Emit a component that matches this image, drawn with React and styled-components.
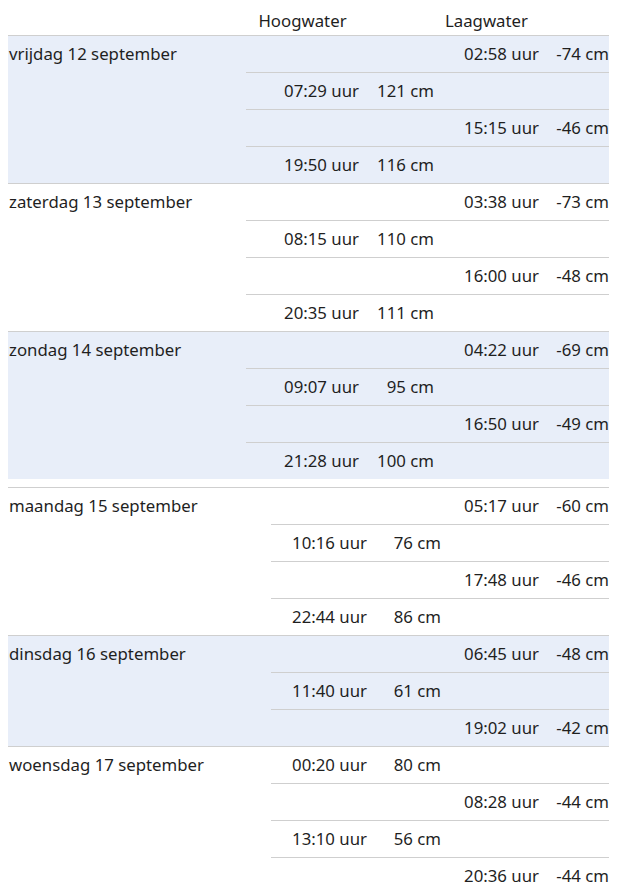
import React from "react";
import styled, { createGlobalStyle } from "styled-components";

const GlobalStyle = createGlobalStyle`
  body {
    margin: 8px;
    background: #ffffff;
    color: #1f1f1f;
    font-family: "Noto Sans", "Open Sans", sans-serif;
    font-size: 16.8px;
  }
`;

const Table = styled.table`
  width: 601px;
  table-layout: fixed;
  border-collapse: separate;
  border-spacing: 0;
  margin-bottom: ${(p) => (p.$gap ? "8px" : "0")};
`;

const HeadCell = styled.th`
  font-weight: normal;
  text-align: center;
  padding: 0;
  height: 27px;
  line-height: 25px;
  vertical-align: top;
  white-space: nowrap;
`;

const Row = styled.tr`
  background: ${(p) => (p.$shaded ? "#e8eef9" : "transparent")};
`;

const Cell = styled.td`
  padding: 0 ${(p) => (p.$date ? "0 0 1px" : "0")};
  border-top: 1px solid #cfcfcf;
  line-height: 36px;
  height: 36px;
  white-space: nowrap;
  vertical-align: top;
  text-align: ${(p) => (p.$date ? "left" : "right")};
`;

const days = [
  {
    label: "vrijdag 12 september",
    rows: [
      [null, null, "02:58 uur", "-74 cm"],
      ["07:29 uur", "121 cm", null, null],
      [null, null, "15:15 uur", "-46 cm"],
      ["19:50 uur", "116 cm", null, null],
    ],
  },
  {
    label: "zaterdag 13 september",
    rows: [
      [null, null, "03:38 uur", "-73 cm"],
      ["08:15 uur", "110 cm", null, null],
      [null, null, "16:00 uur", "-48 cm"],
      ["20:35 uur", "111 cm", null, null],
    ],
  },
  {
    label: "zondag 14 september",
    rows: [
      [null, null, "04:22 uur", "-69 cm"],
      ["09:07 uur", "95 cm", null, null],
      [null, null, "16:50 uur", "-49 cm"],
      ["21:28 uur", "100 cm", null, null],
    ],
  },
  {
    label: "maandag 15 september",
    rows: [
      [null, null, "05:17 uur", "-60 cm"],
      ["10:16 uur", "76 cm", null, null],
      [null, null, "17:48 uur", "-46 cm"],
      ["22:44 uur", "86 cm", null, null],
    ],
  },
  {
    label: "dinsdag 16 september",
    rows: [
      [null, null, "06:45 uur", "-48 cm"],
      ["11:40 uur", "61 cm", null, null],
      [null, null, "19:02 uur", "-42 cm"],
    ],
  },
  {
    label: "woensdag 17 september",
    rows: [
      ["00:20 uur", "80 cm", null, null],
      [null, null, "08:28 uur", "-44 cm"],
      ["13:10 uur", "56 cm", null, null],
      [null, null, "20:36 uur", "-44 cm"],
    ],
  },
];

const tables = [
  { cols: [238, 113, 75, 105, 70], header: true, days: days.slice(0, 3), gap: true },
  { cols: [263, 96, 74, 98, 70], header: false, days: days.slice(3) },
];

function DayRows({ day, shaded }) {
  return day.rows.map((r, i) => (
    <Row key={i} $shaded={shaded}>
      {i === 0 && (
        <Cell $date rowSpan={day.rows.length}>
          {day.label}
        </Cell>
      )}
      {r.map((v, j) => (
        <Cell key={j}>{v || ""}</Cell>
      ))}
    </Row>
  ));
}

export default function App() {
  return (
    <>
      <GlobalStyle />
      {tables.map((t, ti) => (
        <Table key={ti} $gap={t.gap}>
          <colgroup>
            {t.cols.map((w, i) => (
              <col key={i} style={{ width: w }} />
            ))}
          </colgroup>
          {t.header && (
            <thead>
              <tr>
                <HeadCell />
                <HeadCell>Hoogwater</HeadCell>
                <HeadCell />
                <HeadCell>Laagwater</HeadCell>
                <HeadCell />
              </tr>
            </thead>
          )}
          <tbody>
            {t.days.map((d, di) => (
              <DayRows key={di} day={d} shaded={(ti === 0 ? di : di + 1) % 2 === 0} />
            ))}
          </tbody>
        </Table>
      ))}
    </>
  );
}
